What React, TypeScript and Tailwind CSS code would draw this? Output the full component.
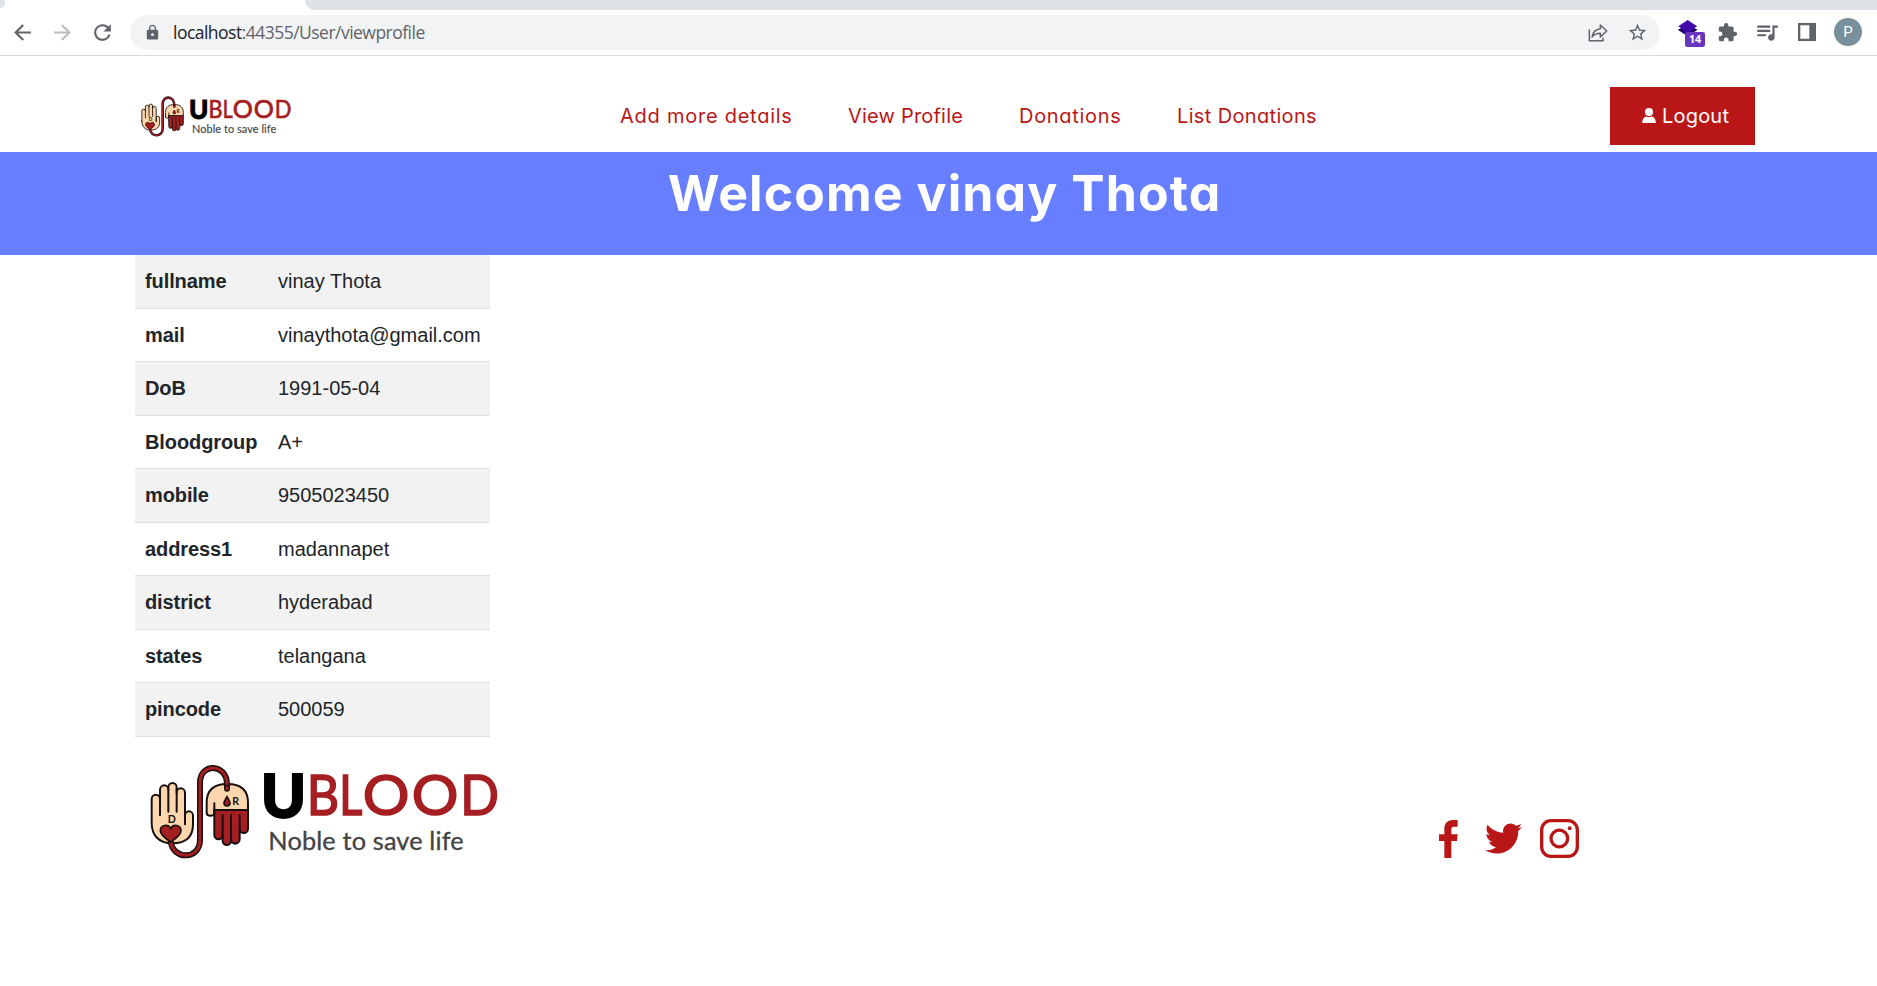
import React from "react";
import { MdArrowBack, MdArrowForward, MdRefresh, MdLock, MdExtension, MdStarBorder, MdQueueMusic } from "react-icons/md";
import { FaTwitter } from "react-icons/fa";

const profile = [
  ["fullname", "vinay Thota"],
  ["mail", "vinaythota@gmail.com"],
  ["DoB", "1991-05-04"],
  ["Bloodgroup", "A+"],
  ["mobile", "9505023450"],
  ["address1", "madannapet"],
  ["district", "hyderabad"],
  ["states", "telangana"],
  ["pincode", "500059"],
];

const links = [
  { label: "Add more details", style: "w-[172px] mr-[56px] tracking-[0.75px]" },
  { label: "View Profile", style: "w-[115px] mr-[56px] tracking-[0.2px]" },
  { label: "Donations", style: "w-[102px] mr-[56px] tracking-[0.7px]" },
  { label: "List Donations", style: "w-[141px] tracking-[0.35px]" },
];

function Logo({ className }: { className: string }) {
  return (
    <svg viewBox="0 0 1170 390" className={className} role="img" aria-label="UBlood">
      <g stroke="#17100f" strokeWidth="6" strokeLinejoin="round" strokeLinecap="round">
        <path
          fill="#fcd7ae"
          d="M65 245V174a12.5 13 0 0 1 25 0V146a12.5 13 0 0 1 25 0V139a12.5 13 0 0 1 25 0V155a12.5 13 0 0 1 25 0V250V224a12 13 0 0 1 24 0V250c0 36-20 57-62 57S65 281 65 245Z"
        />
        <path fill="none" d="M90 170v53M115 145v67M140 145v67" />
        <path fill="#fcd7ae" d="M230 216V185c0-40 24-56 62-56s62 16 62 56v22H253v10c0 10-23 10-23-1Z" />
        <path
          fill="#a51e22"
          d="M253 207H354v56a12.5 13 0 0 1-25 0v32a13 13 0 0 1-26 0v4a12.5 13 0 0 1-25 0V282a12.5 13 0 0 1-25 0Z"
        />
        <path fill="none" d="M253 187v30M278 222v62M303 222v72M329 222v45" />
      </g>
      <path d="M122 300c6 58 88 58 88-4V125c0-61 81-59 81 6v12" fill="none" stroke="#17100f" strokeWidth="18" strokeLinecap="round" />
      <path d="M122 300c6 58 88 58 88-4V125c0-61 81-59 81 6v12" fill="none" stroke="#a51e22" strokeWidth="9" strokeLinecap="round" />
      <path d="M284 134h14" stroke="#17100f" strokeWidth="5" />
      <path
        d="M122 303c-14-10-31-20-31-34 0-18 23-21 31-7 8-14 31-11 31 7 0 14-17 24-31 34Z"
        fill="#a51e22"
        stroke="#17100f"
        strokeWidth="5"
      />
      <path d="M291 167c5 9 9 13 9 19a9 9 0 0 1-18 0c0-6 4-10 9-19Z" fill="#a51e22" stroke="#17100f" strokeWidth="5" />
      <text x="113" y="245" className="fill-[#17100f] font-['Lato'] text-[32px] font-bold">D</text>
      <text x="307" y="191" className="fill-[#17100f] font-['Lato'] text-[32px] font-bold">R</text>
      <text
        x="393"
        y="230"
        textLength="135"
        lengthAdjust="spacingAndGlyphs"
        strokeWidth="6"
        className="fill-black stroke-black font-['Lato'] text-[182px] font-black"
      >
        U
      </text>
      <g strokeWidth="5" className="fill-[#a51e22] stroke-[#a51e22] font-['Lato'] text-[170px]">
        <text x="530" y="222" textLength="97" lengthAdjust="spacingAndGlyphs">B</text>
        <text x="628" y="222" textLength="69" lengthAdjust="spacingAndGlyphs">L</text>
        <text x="698" y="222" textLength="140" lengthAdjust="spacingAndGlyphs">O</text>
        <text x="845" y="222" textLength="140" lengthAdjust="spacingAndGlyphs">O</text>
        <text x="991" y="222" textLength="116" lengthAdjust="spacingAndGlyphs">D</text>
      </g>
      <text x="415" y="326" textLength="586" strokeWidth="1" className="fill-[#444] stroke-[#444] font-['Lato'] text-[76px]">
        Noble to save life
      </text>
    </svg>
  );
}

function BrowserBar() {
  return (
    <div className="h-14 border-b border-[#d9dbde] bg-white font-['Open_Sans',sans-serif]">
      <div className="flex h-[10px] justify-between">
        <div className="h-[8px] w-[5px] rounded-br-[5px] bg-[#dee1e6]" />
        <div className="h-[10px] w-[1572px] rounded-bl-[10px] bg-[#dee1e6]" />
      </div>
      <div className="flex h-[45px] items-center pb-px text-[#5f6368]">
        <MdArrowBack className="ml-[10px] size-[25px]" />
        <MdArrowForward className="ml-[15px] size-[25px] text-[#babcbe]" />
        <MdRefresh className="ml-[15px] size-[25px]" />
        <div className="ml-[15px] mt-[1px] flex h-[35px] w-[1530px] items-center rounded-full bg-[#f1f3f4]">
          <MdLock className="ml-[14px] size-[17px]" />
          <div className="ml-[12px] flex-1 whitespace-nowrap text-[17.5px] tracking-[-0.52px]">
            <span className="text-[#202124]">localhost</span>:44355/User/viewprofile
          </div>
          <svg viewBox="0 0 60 54" className="mr-[19px] h-[18px] w-[20px]" fill="none" stroke="currentColor" strokeWidth="4.5">
            <path d="M4 16v34h41v-9" />
            <path d="M37 3v11C22 16 14 24 12 39c6-8 14-11 25-11v11l19-18Z" strokeLinejoin="round" />
          </svg>
          <MdStarBorder className="mr-[12px] size-[21px]" />
        </div>
        <div className="ml-[17px] h-[30px] w-[29px]">
          <svg viewBox="0 0 87 90" className="size-full">
            <path d="M2 38 32 24l30 14-30 20Z" fill="#24066b" />
            <path d="M32 9 60 28 32 48 4 28Z" fill="#4408ac" />
            <rect x="24" y="45" width="60" height="45" rx="7" fill="#6a35be" />
            <text x="54" y="79" textAnchor="middle" className="fill-white text-[32px] font-bold">14</text>
          </svg>
        </div>
        <MdExtension className="ml-[11px] size-[21px]" />
        <MdQueueMusic className="ml-[16px] size-[26px]" />
        <svg viewBox="0 0 54 54" className="ml-[18px] size-[18px]">
          <path d="M0 0h54v54H0ZM7 7v40h27V7Z" fill="currentColor" fillRule="evenodd" />
        </svg>
        <div className="ml-[18px] flex size-7 items-center justify-center rounded-full bg-[#78909c] font-['Roboto'] text-[15px] text-white">P</div>
      </div>
    </div>
  );
}

export default function App() {
  return (
    <div className="h-[986px] overflow-hidden bg-white">
      <BrowserBar />
      <header className="flex h-24 font-['Inter',sans-serif] [font-feature-settings:'cv11']">
        <Logo className="ml-[132px] mt-[30px] h-[56px] w-[169px] shrink-0" />
        <nav className="ml-[319px] mt-[46px] flex h-7 items-center whitespace-nowrap text-[20px] text-[#b91717]">
          {links.map((l) => (
            <a key={l.label} className={l.style}>{l.label}</a>
          ))}
        </nav>
        <button className="ml-auto mr-[122px] mt-[31px] flex h-[58px] w-[145px] items-center bg-[#b91717] pl-[32px] text-[20px] text-white">
          <svg viewBox="0 0 42 46" className="mb-[2px] mr-[6px] h-[15px] w-[14px]" fill="currentColor">
            <circle cx="21" cy="12.5" r="12.5" />
            <path d="M0 46c0-12 6-19 13-20 5 3 11 3 16 0 7 1 13 8 13 20Z" />
          </svg>
          <span className="tracking-[0.2px]">Logout</span>
        </button>
      </header>
      <div className="flex h-[103px] justify-center bg-[#667eff] pt-[11px] pl-[12px] font-['Inter',sans-serif] [font-feature-settings:'cv11']">
        <h1 className="whitespace-nowrap text-[50px] font-bold leading-[60px] tracking-[1.1px] text-white">Welcome vinay Thota</h1>
      </div>
      <main className="h-[486px] pl-[135px] font-['Liberation_Sans',sans-serif]">
        <dl className="w-[355px] text-[20px] text-[#212529]">
          {profile.map(([k, v]) => (
            <div key={k} className="flex h-[53.5px] items-center border-b border-[#dee2e6] pl-[10px] odd:bg-[#f2f2f2]">
              <dt className="w-[133px] font-bold tracking-[-0.1px]">{k}</dt>
              <dd>{v}</dd>
            </div>
          ))}
        </dl>
      </main>
      <footer className="flex pl-[130px] text-[#b91717]">
        <Logo className="h-[130px] w-[390px]" />
        <div className="ml-[919px] mt-[78px] flex h-[39px] items-center">
          <svg viewBox="88 57 57 114" className="h-[38px] w-[19px]" fill="currentColor">
            <path d="M144 57h-12c-18 0-28 10-28 26v17H88v20h16v51h21v-51h17l2-20h-19V86c0-6 2-9 8-9h11Z" />
          </svg>
          <FaTwitter className="ml-[27px] size-[37px]" />
          <svg viewBox="390 56 117 117" className="ml-[18px] size-[39px]" fill="none" stroke="currentColor" strokeWidth="10">
            <rect x="395" y="61" width="107" height="107" rx="28" />
            <circle cx="448" cy="114.5" r="25" />
            <circle cx="479" cy="84" r="6" fill="currentColor" stroke="none" />
          </svg>
        </div>
      </footer>
    </div>
  );
}
